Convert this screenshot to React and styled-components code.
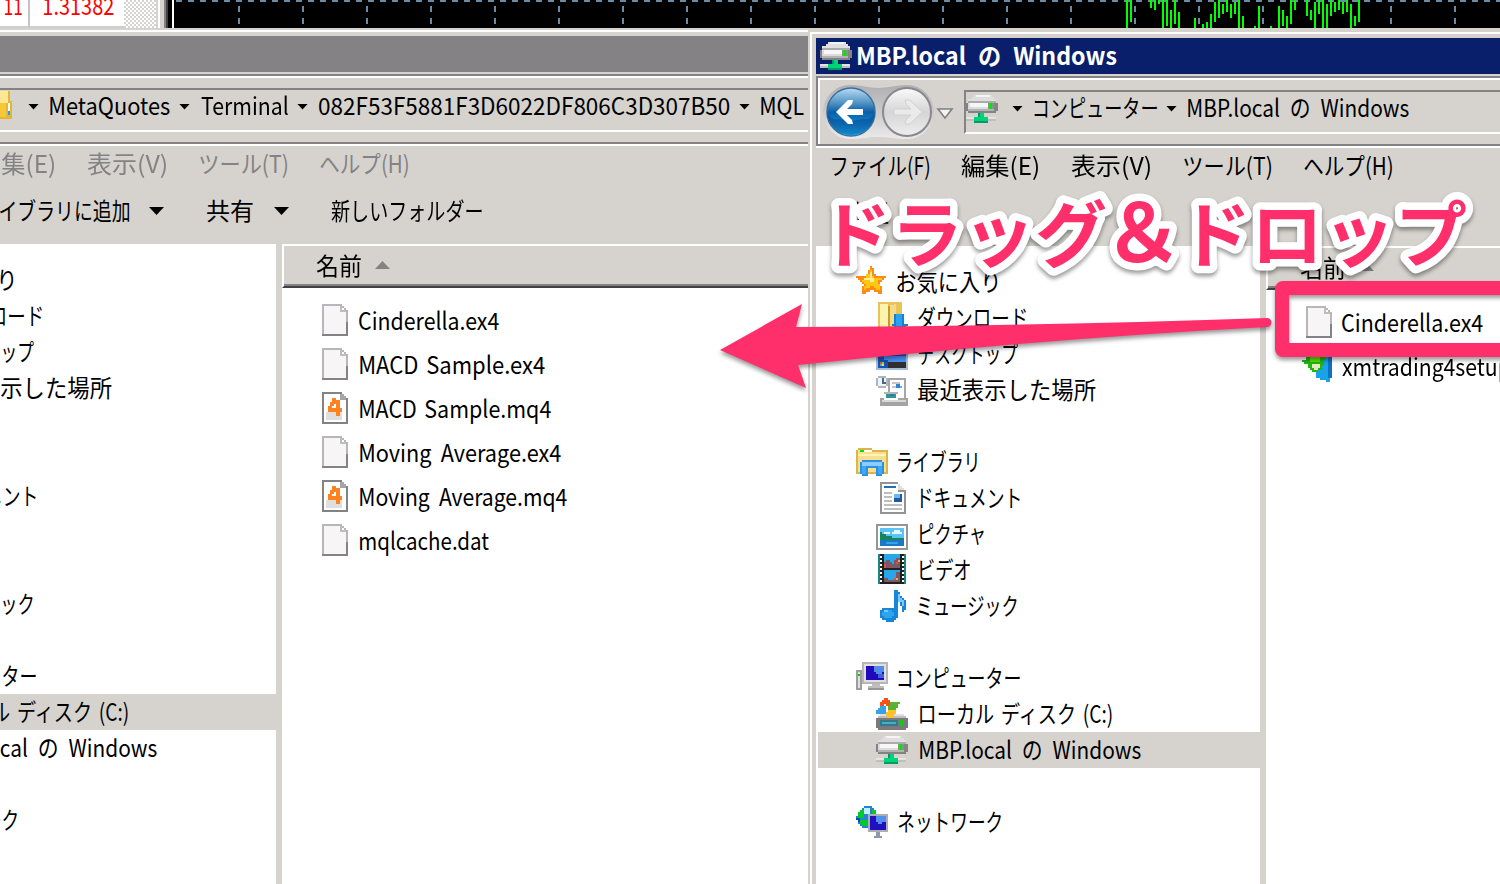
import React, { useLayoutEffect, useRef } from 'react';
import styled, { createGlobalStyle, css } from 'styled-components';

const FACE = '#d6d3ce';
const SHADE = '#848284';
const DARK = '#424142';
const PINK = '#ff2f6c';
const UI_FONT = '"Noto Sans CJK JP", "Liberation Sans", sans-serif';

const GlobalStyle = createGlobalStyle`
  * { box-sizing: border-box; }
  body { margin: 0; background: ${FACE}; font-family: ${UI_FONT}; font-size: 24px; color: #000; }
`;

/* ---------- text condensed to the width of the system UI font ---------- */

const LabelBox = styled.span`
  display: block;
  flex: none;
  width: ${p => p.$w}px;
  margin-left: ${p => p.$dx || 0}px;
  margin-bottom: ${p => p.$lift || 0}px;
  height: 30px;
  line-height: 30px;
  white-space: nowrap;
  font-size: 24px;
  font-weight: ${p => (p.$bold ? 700 : 400)};
  word-spacing: ${p => p.$gap || 0}px;
  color: ${p => p.$color || 'inherit'};
`;

const LabelText = styled.span`
  display: inline-block;
  transform-origin: 0 50%;
`;

function Label({ w, dx, lift, gap, bold, color, children }) {
  const ref = useRef(null);
  useLayoutEffect(() => {
    const el = ref.current;
    const ctx = document.createElement('canvas').getContext('2d');
    const cs = getComputedStyle(el);
    ctx.font = `${cs.fontWeight} ${cs.fontSize} ${cs.fontFamily}`;
    ctx.wordSpacing = `${gap || 0}px`;
    const m = ctx.measureText(children);
    const scale = w / (m.actualBoundingBoxLeft + m.actualBoundingBoxRight);
    el.style.transform = `translateX(${m.actualBoundingBoxLeft * scale}px) scaleX(${scale})`;
  }, [w, gap, children]);
  return (
    <LabelBox $w={w} $dx={dx} $lift={lift} $gap={gap} $bold={bold} $color={color}>
      <LabelText ref={ref}>{children}</LabelText>
    </LabelBox>
  );
}

/* ---------- icons, on a 16 x 16 grid ---------- */

const Pixel = styled.svg.attrs({ shapeRendering: 'crispEdges' })`
  display: block;
  flex: none;
  width: ${p => p.$w || 32}px;
  height: 32px;
`;

const NetDrive = () => (
  <Pixel viewBox="0 -1 16 16">
    <path d="M4 0h9v1h1v1h1v1H1V2h2V1h1z" fill="#dedfde" />
    <path d="M5 0h7v1H5z" fill="#f4f4f4" />
    <path d="M1 3h14v1h1v4h-1v1H1V8H0V4h1z" fill="#848284" />
    <path d="M1 3h14v1H1z" fill="#adaaad" />
    <path d="M1 4h13v4H1z" fill="#dcdcdc" />
    <path d="M2 4h10v2H2z" fill="#f7f7f7" />
    <path d="M1 7h13v1H1z" fill="#b5b2b5" />
    <path d="M11 4h3v3h-3z" fill="#73a273" />
    <path d="M12 4h1v3h-1z" fill="#00e800" />
    <path d="M0 11h15v2H0z" fill="#e4e4e4" />
    <path d="M0 12h15v1H0z" fill="#bdbebd" />
    <path d="M6 9h3v2h2v3H4v-3h2z" fill="#00d276" />
    <path d="M6 9h1v2H6zM4 13h7v1H4z" fill="#009a6b" />
  </Pixel>
);

const Star = () => (
  <Pixel viewBox="0 0 16 16">
    <path d="M7 0h1v1h1v3h1v1h5v1h-1v1h-1v1h-1v2h1v4h-2v-1H9v-1H7v1H5v1H3v-4h1V9H3V8H2V7H1V6H0V5h5V4h1V2h1z" fill="#ff8a18" />
    <path d="M7 2h1v3h1v1h4v1h-2v2h1v3h-2v-1H9v-1H7v1H5v1H4v-2h1V9H4V8H3V7h1V6h1V4h2z" fill="#ffc710" />
    <path d="M7 3h1v3h1v2H7V7H4V6h3z" fill="#ffef94" />
  </Pixel>
);

const Downloads = () => (
  <Pixel viewBox="0 0 16 16">
    <path d="M1 0h12v13H1z" fill="#e7c35a" />
    <path d="M2 1h4v12H2z" fill="#fff3ad" />
    <path d="M6 2l4-1v11l-4 2z" fill="#f7db84" />
    <path d="M6 2h1v12H6z" fill="#c69a31" />
    <path d="M9 6h5v5h2v1h-1v1h-1v1h-1v1h-2v-1h-1v-1H9v-1H8v-1h1z" fill="#1082d6" />
    <path d="M10 6h3v6h-3z" fill="#29a2ef" />
  </Pixel>
);

const DesktopIcon = () => (
  <Pixel viewBox="0 0 16 16">
    <path d="M0 2h16v14H0z" fill="#a5bed6" />
    <path d="M1 3h14v8H1z" fill="#1851c6" />
    <path d="M4 9h11v3H4z" fill="#4a8ef7" />
    <path d="M1 12h14v3H1z" fill="#313031" />
    <path d="M1 11h5v4H1z" fill="#1851b5" />
    <path d="M2 12h1v1H2z" fill="#ff4a18" />
    <path d="M3 12h1v1H3z" fill="#7bdb31" />
    <path d="M2 13h1v1H2z" fill="#31b2ff" />
    <path d="M3 13h1v1H3z" fill="#ffdb31" />
  </Pixel>
);

const Recent = () => (
  <Pixel viewBox="0 0 16 16">
    <path d="M6 2h9v11H6z" fill="#a5a6a5" />
    <path d="M7 3h7v9H7z" fill="#fff" />
    <path d="M8 4h4v1H8zM8 6h2v1H8z" fill="#c6c7c6" />
    <path d="M10 5h2v2h-2z" fill="#3182ce" />
    <path d="M12 6h1v1h-1z" fill="#52aeff" />
    <path d="M4 9h7v4H4z" fill="#fff" />
    <path d="M4 9h7v1H4z" fill="#b5b6b5" />
    <path d="M5 10h5v2H5z" fill="#31968c" />
    <path d="M7 10h2v1H7z" fill="#2979bd" />
    <path d="M2 12h2v1h8v-1h4v4H2z" fill="#a5a2a5" />
    <path d="M3 13h12v1H3z" fill="#d6d7d6" />
    <path d="M1 1h4v1h1v4H5v1H1V6H0V2h1z" fill="#adb6bd" />
    <path d="M1 2h4v4H1z" fill="#eff3f7" />
    <path d="M3 2h1v2h1v1H3z" fill="#4a6984" />
  </Pixel>
);

const Library = () => (
  <Pixel viewBox="0 0 16 16">
    <path d="M0 2h1V1h7v1h8v12H0z" fill="#dcb44a" />
    <path d="M1 2h6v1h8v10H1z" fill="#f7df8c" />
    <path d="M1 4h14v1H1z" fill="#fff3b5" />
    <path d="M2 2h2v1H2z" fill="#00e300" />
    <path d="M4 2h4v1H4z" fill="#fff" />
    <path d="M3 7h10v1h1v6h-1v1h-3v-4H6v4H3v-1H2V8h1z" fill="#2992e6" />
    <path d="M3 8h10v2H3z" fill="#8ccbff" />
    <path d="M3 10h2v4H3zM11 10h2v4h-2z" fill="#42a6f7" />
  </Pixel>
);

const DocumentIcon = () => (
  <Pixel viewBox="0 0 16 16">
    <path d="M2 0h9v1h1v1h1v1h1v1h1v12H2z" fill="#949294" />
    <path d="M3 1h8v4h3v10H3z" fill="#fff" />
    <path d="M11 1h1v1h1v1h1v1h-3z" fill="#dedfde" />
    <path d="M4 2h6v1H4z" fill="#2171b5" />
    <path d="M4 5h4v1H4zM4 7h4v1H4zM4 9h4v1H4zM4 11h9v1H4zM4 13h9v1H4z" fill="#bdbebd" />
    <path d="M9 6h4v4H9z" fill="#2159a5" />
    <path d="M9 6h3v2H9z" fill="#6bbaf7" />
  </Pixel>
);

const Picture = () => (
  <Pixel viewBox="0 0 16 16">
    <path d="M0 3h16v13H0z" fill="#949694" />
    <path d="M1 4h14v11H1z" fill="#fff" />
    <path d="M2 5h12v9H2z" fill="#5ac3f7" />
    <path d="M8 7h1V6h3v1h1v1H8zM4 7h3v1H4z" fill="#e7f7ff" />
    <path d="M2 7h1v1h2v1h3v1h6v1H2z" fill="#18865a" />
    <path d="M2 11h12v3H2z" fill="#1879c6" />
    <path d="M5 12h6v1H5z" fill="#39a2e7" />
  </Pixel>
);

const Video = () => (
  <Pixel viewBox="0 0 16 16">
    <path d="M1 0h14v15H1z" fill="#212021" />
    <path d="M1 0h1v15H1zM14 0h1v15h-1z" fill="#18867b" />
    <path d="M2 1h1v1H2zM2 3h1v1H2zM2 5h1v1H2zM2 7h1v1H2zM2 9h1v1H2zM2 11h1v1H2zM2 13h1v1H2zM13 1h1v1h-1zM13 3h1v1h-1zM13 5h1v1h-1zM13 7h1v1h-1zM13 9h1v1h-1zM13 11h1v1h-1zM13 13h1v1h-1z" fill="#fff" />
    <path d="M4 0h8v7H4zM4 8h8v6H4z" fill="#29a6e7" />
    <path d="M4 4h1V3h2v1h1v1h1V3h1V2h2v5H4zM4 12h2v1h3v-1h1V9h2v5H4z" fill="#7b5963" />
    <path d="M4 5h1v2H4zM10 4h1v1h-1zM9 12h1v1H9z" fill="#e74a4a" />
    <path d="M11 3h1v1h-1zM10 12h1v1h-1z" fill="#ffa64a" />
  </Pixel>
);

const Music = () => (
  <Pixel viewBox="0 0 16 16">
    <path d="M9 0h2v1h1v2h1v1h1v1h1v5h-1v1h-1V8h-1V6h-1v8h-1v1H9v1H5v-1H3v-1H2v-4h1V9h6z" fill="#1886d6" />
    <path d="M4 10h4v1h1v2H8v1H4v-1H3v-2h1z" fill="#29a6ef" />
    <path d="M11 2h1v2h1v1h1v3h-1V6h-2zM4 10h2v1H4z" fill="#7bc7ff" />
  </Pixel>
);

const Computer = () => (
  <Pixel viewBox="0 0 16 16">
    <path d="M0 4h3v10H0z" fill="#9c9e9c" />
    <path d="M1 5h1v8H1z" fill="#dedfde" />
    <path d="M1 6h1v1H1z" fill="#00d200" />
    <path d="M3 0h13v11H3z" fill="#b5b6b5" />
    <path d="M4 1h11v9H4z" fill="#dedfde" />
    <path d="M5 2h9v7H5z" fill="#2108bd" />
    <path d="M9 2h5v3h-1v1h-3V5H9z" fill="#528ae7" />
    <path d="M11 6h3v2h-3z" fill="#4261d6" />
    <path d="M8 11h4v1h2v2H6v-2h2z" fill="#bdbebd" />
    <path d="M6 13h8v1H6z" fill="#949694" />
  </Pixel>
);

const LocalDisk = () => (
  <Pixel viewBox="0 0 16 16">
    <path d="M2 8h12v1h1v1H1V9h1z" fill="#dedfde" />
    <path d="M1 9h14v1h1v5h-1v1H1v-1H0v-5h1z" fill="#7b797b" />
    <path d="M1 9h14v1H1z" fill="#bdbebd" />
    <path d="M2 11h9v3H2z" fill="#31798c" />
    <path d="M3 12h7v1H3z" fill="#52aabd" />
    <path d="M12 11h2v3h-2z" fill="#18c618" />
    <path d="M3 1h1V0h2v1h1v3H5V3H4v1H2V2h1z" fill="#f75118" />
    <path d="M7 2h5v1h-1v2h-1v1H6V4h1z" fill="#5ab231" />
    <path d="M2 4h3v4H0V6h1V5h1z" fill="#39a2e7" />
    <path d="M6 6h4v2H9v2H6V9H5V7h1z" fill="#ffc329" />
  </Pixel>
);

const NetworkIcon = () => (
  <Pixel viewBox="0 0 16 16">
    <path d="M3 1h1V0h4v1h1v1h1v8H8v1H3v-1H2V9H1V7H0V5h1V3h1V2h1z" fill="#2182d6" />
    <path d="M2 2h2v4H1V3h1zM2 7h4v3H3V9H2zM8 2h2v3H8z" fill="#00ca29" />
    <path d="M4 1h3v3H4z" fill="#bdf3ff" />
    <path d="M0 6h2v2H1V7H0z" fill="#1049ad" />
    <path d="M6 4h10v9H6z" fill="#adaeb5" />
    <path d="M7 5h8v7H7z" fill="#2110bd" />
    <path d="M10 5h5v3h-2v1h-2V8h-1z" fill="#528eef" />
    <path d="M10 13h2v2h1v1H9v-1h1z" fill="#8c9aad" />
  </Pixel>
);

const FolderIcon = () => (
  <Pixel viewBox="0 1 16 16">
    <path d="M2 0h12v6h1v9H2z" fill="#e7b631" />
    <path d="M3 1h10v6H3z" fill="#ffe794" />
    <path d="M3 7h9v7H3z" fill="#f7c739" />
    <path d="M13 7h1v4h-1z" fill="#fff" />
    <path d="M13 11h1v2h-1z" fill="#18a2f7" />
  </Pixel>
);

const BlankFile = () => (
  <Pixel viewBox="0 0 13 16" $w={26}>
    <path d="M0 0h10v1h1v1h1v1h1v13H0z" fill="#b9b6b9" />
    <path d="M0 15h13v1H0zM12 9h1v7h-1z" fill="#848284" />
    <path d="M1 1h8v3h3v11H1z" fill="#f8f5f6" />
    <path d="M10 1v2h2V3h-1V2h-1z" fill="#fff" />
    <path d="M9 1h1v2h2v1H9z" fill="#bdbebd" />
  </Pixel>
);

const Mq4File = () => (
  <Pixel viewBox="0 0 13 16" $w={26}>
    <path d="M0 0h10v1h1v1h1v1h1v13H0z" fill="#848284" />
    <path d="M1 1h8v3h3v11H1z" fill="#fff" />
    <path d="M9 1h2v1h1v2H9z" fill="#a5a6a5" />
    <path d="M2 10h8v4H2z" fill="#dedfde" />
    <path d="M5 3h2v1h2v4h1v2H9v2H7v-2H3V7h1V5h1z" fill="#ff8221" />
    <path d="M6 6h1v2H5V7h1z" fill="#fff" />
  </Pixel>
);

const SetupFile = () => (
  <Pixel viewBox="0 -2 16 16">
    <path d="M7 0h8v12h-1v2h-2v-1H9v-1H7z" fill="#18a2e7" />
    <path d="M13 1h2v11h-2z" fill="#1071bd" />
    <path d="M2 0h10v3h-1v3h-1v2H8v1H5V8H4V7H3V5H1V4H0V3h2z" fill="#21b610" />
    <path d="M4 0h5v4H4z" fill="#5ae708" />
    <path d="M5 5h4v2H8v1H6V7H5z" fill="#e7ebb5" />
  </Pixel>
);

const Arrow = styled.i`
  flex: none;
  display: block;
  width: ${p => p.$w}px;
  height: ${p => p.$h}px;
  margin-left: ${p => p.$dx || 0}px;
  margin-bottom: ${p => p.$lift || 0}px;
  background: ${p => p.$color || '#000'};
  clip-path: ${p => (p.$up ? 'polygon(50% 0, 100% 100%, 0 100%)' : 'polygon(0 0, 100% 0, 50% 100%)')};
`;

/* ---------- top strip: quotes table and chart ---------- */

const Strip = styled.div`
  display: flex;
  height: 28px;
  overflow: hidden;
`;

const PriceCell = styled.div`
  flex: none;
  width: ${p => p.$w}px;
  height: 28px;
  overflow: hidden;
  background: #fff;
  border-bottom: 2px solid #d0cdd0;
  border-right: ${p => (p.$line ? '2px solid #c6c3c6' : 'none')};
  display: flex;
  align-items: flex-end;
  padding: 0 0 6px ${p => p.$pad}px;
`;

const Dither = styled.div`
  flex: none;
  width: 32px;
  background: repeating-conic-gradient(${FACE} 0 25%, #fff 0 50%) 0 0 / 4px 4px;
`;

const Bevel = styled.div`
  flex: none;
  width: 18px;
  background: linear-gradient(90deg, ${FACE} 0 2px, #fff 2px 4px, ${FACE} 4px 8px, ${SHADE} 8px 10px,
    ${DARK} 10px 12px, #000 12px 16px, #fff 16px 18px);
`;

const ChartSvg = styled.svg.attrs({ shapeRendering: 'crispEdges' })`
  display: block;
  flex: none;
  width: 1326px;
  height: 28px;
  background: #000;
`;

const BARS = [
  [1126, 0, 28], [1130, 0, 22], [1150, 0, 8], [1154, 0, 10], [1158, 0, 4], [1162, 0, 28], [1166, 0, 26],
  [1170, 10, 28], [1174, 0, 24], [1178, 12, 28], [1194, 18, 28], [1202, 24, 28], [1206, 22, 28],
  [1210, 14, 28], [1214, 2, 22], [1218, 0, 18], [1222, 4, 14], [1226, 0, 12], [1230, 4, 18],
  [1234, 2, 14], [1238, 0, 28], [1242, 16, 28], [1254, 26, 28], [1258, 6, 28], [1270, 26, 28],
  [1278, 6, 28], [1282, 10, 26], [1286, 16, 28], [1290, 0, 24], [1294, 0, 10], [1306, 0, 16],
  [1310, 10, 20], [1314, 2, 28], [1318, 0, 14], [1322, 0, 28], [1326, 4, 28], [1330, 0, 16],
  [1334, 2, 12], [1338, 0, 10], [1342, 2, 14], [1346, 0, 12], [1350, 4, 28], [1354, 16, 26], [1358, 0, 22],
];

const Chart = () => (
  <ChartSvg viewBox="174 0 1326 28">
    <path d="M176 1H1500" stroke="#6b8aa3" strokeWidth="2" strokeDasharray="6 6" />
    {Array.from({ length: 20 }, (_, i) => (
      <path key={i} d={`M${239 + 64 * i} 6V28`} stroke="#6b8aa3" strokeWidth="2" strokeDasharray="6 6" />
    ))}
    {BARS.map(([x, a, b]) => (
      <rect key={x} x={x} y={a} width="2" height={b - a} fill="#00ff00" />
    ))}
  </ChartSvg>
);

/* ---------- explorer window ---------- */

const Desktop = styled.div`
  position: relative;
  width: 1500px;
  height: 884px;
  overflow: hidden;
  background: ${FACE};
`;

const WindowFrame = styled.section`
  position: absolute;
  left: ${p => p.$x}px;
  top: ${p => p.$y}px;
  width: ${p => p.$w}px;
  height: 880px;
  overflow: hidden;
  display: flex;
  flex-direction: column;
  background: ${FACE};
  padding: 8px 0 0 8px;
  box-shadow: inset 2px 2px 0 ${FACE}, inset 4px 4px 0 #fff;
`;

const TitleBar = styled.header`
  flex: none;
  height: 36px;
  margin-bottom: 2px;
  display: flex;
  align-items: center;
  padding-left: 4px;
  color: #fff;
  background: ${p => (p.$active ? '#0a1f6b' : SHADE)};
`;

const Rebar = styled.div`
  flex: none;
  height: 70px;
  margin-bottom: 2px;
  display: flex;
  border: solid ${SHADE};
  border-width: 2px 0 2px 2px;
  box-shadow: inset 2px 2px 0 #fff, 0 2px 0 #fff;
  padding: 12px 0 0 4px;
`;

const NavButtons = styled.svg`
  display: block;
  flex: none;
  width: 133px;
  height: 56px;
  margin-top: -6px;
`;

const AddressBox = styled.div`
  flex: none;
  width: 1000px;
  height: 44px;
  margin-left: 9px;
  display: flex;
  align-items: center;
  border: solid;
  border-width: 2px 0 2px 2px;
  border-color: ${SHADE} #fff #fff ${SHADE};
  padding-bottom: 6px;
`;

const MenuBar = styled.nav`
  flex: none;
  height: 36px;
  display: flex;
  align-items: center;
  padding-bottom: 3px;
  color: ${p => (p.$active ? '#000' : SHADE)};
`;

const ToolBar = styled.div`
  flex: none;
  height: 62px;
  display: flex;
  align-items: center;
  padding-bottom: 4px;
`;

const Body = styled.div`
  flex: 1;
  display: flex;
  min-height: 0;
`;

const NavPane = styled.aside`
  flex: none;
  width: 444px;
  padding-top: 18px;
  background: #fff;
`;

const NavRow = styled.div`
  display: flex;
  align-items: center;
  height: 36px;
  margin-left: 2px;
  padding-left: ${p => (p.$child ? 58 : 38)}px;
  ${p => p.$selected && css`background: ${FACE};`}
`;

const NavSpacer = styled.div`
  height: 36px;
`;

const ListPane = styled.main`
  flex: none;
  width: 800px;
  margin-left: 6px;
  background: #fff;
`;

const ListHeader = styled.div`
  display: flex;
  align-items: center;
  height: 44px;
  padding: 0 0 2px 32px;
  background: ${FACE};
  border-top: 2px solid #fff;
  border-left: 2px solid #fff;
  border-bottom: 2px solid ${DARK};
  box-shadow: inset 0 -2px 0 ${SHADE};
`;

const FileRows = styled.div`
  padding: 10px 0 0 40px;
`;

const FileRow = styled.div`
  display: flex;
  align-items: center;
  height: 44px;
`;

const NAV = [
  { t: 'お気に入り', w: 100, dx: 9, Icon: Star },
  { t: 'ダウンロード', w: 108, dx: 10, Icon: Downloads, child: true },
  { t: 'デスクトップ', w: 99, dx: 11, Icon: DesktopIcon, child: true },
  { t: '最近表示した場所', w: 178, dx: 10, Icon: Recent, child: true },
  null,
  { t: 'ライブラリ', w: 79, dx: 10, Icon: Library },
  { t: 'ドキュメント', w: 99, dx: 13, Icon: DocumentIcon, child: true },
  { t: 'ピクチャ', w: 64, dx: 12, Icon: Picture, child: true },
  { t: 'ビデオ', w: 50, dx: 12, Icon: Video, child: true },
  { t: 'ミュージック', w: 99, dx: 10, Icon: Music, child: true },
  null,
  { t: 'コンピューター', w: 122, dx: 10, Icon: Computer },
  { t: 'ローカル ディスク (C:)', w: 193, dx: 12, Icon: LocalDisk, child: true, gap: 3 },
  { t: 'MBP.local の Windows', w: 221, dx: 12, Icon: NetDrive, child: true, gap: 6 },
  null,
  { t: 'ネットワーク', w: 103, dx: 10, Icon: NetworkIcon },
];

const MENU = [
  { t: 'ファイル(F)', w: 97, dx: 16 },
  { t: '編集(E)', w: 77, dx: 32 },
  { t: '表示(V)', w: 79, dx: 33 },
  { t: 'ツール(T)', w: 87, dx: 34 },
  { t: 'ヘルプ(H)', w: 88, dx: 33 },
];

const HistoryButtons = () => (
  <NavButtons viewBox="822 85 133 56">
    <defs>
      <linearGradient id="back" x1="0" y1="0" x2="0" y2="1">
        <stop offset="0" stopColor="#b8dcf4" />
        <stop offset="0.3" stopColor="#5596c6" />
        <stop offset="0.5" stopColor="#0a5ea6" />
        <stop offset="0.75" stopColor="#0e86d0" />
        <stop offset="1" stopColor="#1ccbff" />
      </linearGradient>
      <linearGradient id="fwd" x1="0" y1="0" x2="0" y2="1">
        <stop offset="0" stopColor="#fbfafb" />
        <stop offset="0.5" stopColor="#d6d5d6" />
        <stop offset="1" stopColor="#efeeef" />
      </linearGradient>
      <linearGradient id="pill" x1="0" y1="0" x2="0" y2="1">
        <stop offset="0" stopColor="#a9a8ab" />
        <stop offset="0.5" stopColor="#c9c8cb" />
        <stop offset="1" stopColor="#efeef0" />
      </linearGradient>
    </defs>
    <path d="M850 86C862 86 868 89 878 89S896 86 907 86A27 27 0 0 1 907 140C896 140 890 138 878 138S862 140 850 140A27 27 0 0 1 850 86Z" fill="url(#pill)" opacity="0.85" />
    <circle cx="851" cy="113" r="24" fill="url(#back)" stroke="#3a6f9f" strokeWidth="1.5" />
    <path d="M827 112a24 24 0 0 0 48 0c-2 8-8 9-12 8l-12 2-12-2c-4 1-10 0-12-8z" fill="#0b3f86" opacity="0.45" />
    <path d="M836 113l12-12h5l-1 4-5 5h16v6h-16l5 5 1 4h-5z" fill="#fff" />
    <circle cx="907" cy="113" r="24" fill="url(#fwd)" stroke="#8a888c" strokeWidth="2" />
    <path d="M922 113l-12-12h-5l1 4 5 5h-17v6h17l-5 5-1 4h5z" fill="#ebeaeb" stroke="#d3d1d3" />
    <path d="M938 110h14l-7 9z" fill="#f3f3f3" stroke="#7f8084" strokeWidth="1.6" />
  </NavButtons>
);

function ExplorerWindow({ x, y, w, active, title, addressIcon, path, tools, selected, files }) {
  return (
    <WindowFrame $x={x} $y={y} $w={w}>
      <TitleBar $active={active}>
        {title && <NetDrive />}
        {title && <Label w={259} dx={6} lift={2} gap={7} bold>{title}</Label>}
      </TitleBar>
      <Rebar>
        <HistoryButtons />
        <AddressBox>
          {addressIcon}
          {path.map((p, i) => (
            <React.Fragment key={p.t}>
              <Arrow $w={11} $h={6} $dx={i ? 9 : 14} $lift={1} />
              <Label w={p.w} dx={11} lift={5} gap={p.gap}>{p.t}</Label>
            </React.Fragment>
          ))}
        </AddressBox>
      </Rebar>
      <MenuBar $active={active}>
        {MENU.map(m => <Label key={m.t} w={m.w} dx={m.dx}>{m.t}</Label>)}
      </MenuBar>
      <ToolBar>
        {tools.map(t => (
          <React.Fragment key={t.t}>
            <Label w={t.w} dx={t.dx} lift={2}>{t.t}</Label>
            {t.menu && <Arrow $w={15} $h={8} $dx={t.menu} />}
          </React.Fragment>
        ))}
      </ToolBar>
      <Body>
        <NavPane>
          {NAV.map((n, i) => n ? (
            <NavRow key={n.t} $child={n.child} $selected={n.t === selected}>
              <n.Icon />
              <Label w={n.w} dx={n.dx} lift={3} gap={n.gap}>{n.t}</Label>
            </NavRow>
          ) : <NavSpacer key={i} />)}
        </NavPane>
        <ListPane>
          <ListHeader>
            <Label w={45}>名前</Label>
            <Arrow $w={15} $h={8} $dx={14} $up $color={SHADE} />
          </ListHeader>
          <FileRows>
            {files.map(f => (
              <FileRow key={f.t}>
                {f.icon}
                <Label w={f.w} dx={f.dx || 12} gap={f.gap}>{f.t}</Label>
              </FileRow>
            ))}
          </FileRows>
        </ListPane>
      </Body>
    </WindowFrame>
  );
}

const SetupIconSlot = styled.div`
  margin: 0 -2px 0 -4px;
`;

/* ---------- annotation layer ---------- */

const Annotation = styled.svg`
  position: absolute;
  left: 0;
  top: 0;
  width: 1500px;
  height: 884px;
  pointer-events: none;
`;

const Shadowed = styled.g`
  filter: drop-shadow(0 3px 2px rgba(0, 0, 0, 0.4));
`;

const Headline = styled.text`
  font-family: "Noto Sans CJK JP", sans-serif;
  font-weight: 700;
  font-size: 72px;
  fill: ${PINK};
  stroke: #fff;
  stroke-width: 15px;
  stroke-linejoin: round;
  paint-order: stroke fill;
`;

const Ampersand = styled.tspan`
  font-size: 80px;
`;

export default function App() {
  return (
    <Desktop>
      <GlobalStyle />
      <Strip>
        <PriceCell $w={30} $pad={5} $line><Label w={17} color="#f00">11</Label></PriceCell>
        <PriceCell $w={94} $pad={14}><Label w={70} color="#f00">1.31382</Label></PriceCell>
        <Dither />
        <Bevel />
        <Chart />
      </Strip>
      <ExplorerWindow
        x={-176} y={28} w={984}
        addressIcon={<FolderIcon />}
        path={[
          { t: 'MetaQuotes', w: 120 },
          { t: 'Terminal', w: 87 },
          { t: '082F53F5881F3D6022DF806C3D307B50', w: 411 },
          { t: 'MQL', w: 43 },
        ]}
        tools={[
          { t: '整理', w: 47, dx: 26, menu: 16 },
          { t: 'ライブラリに追加', w: 147, dx: 46, menu: 20 },
          { t: '共有', w: 46, dx: 43, menu: 21 },
          { t: '新しいフォルダー', w: 151, dx: 42 },
        ]}
        selected="ローカル ディスク (C:)"
        files={[
          { t: 'Cinderella.ex4', w: 140, dx: 11, icon: <BlankFile /> },
          { t: 'MACD Sample.ex4', w: 185, gap: 3, icon: <BlankFile /> },
          { t: 'MACD Sample.mq4', w: 191, gap: 3, icon: <Mq4File /> },
          { t: 'Moving Average.ex4', w: 201, gap: 5, icon: <BlankFile /> },
          { t: 'Moving Average.mq4', w: 207, gap: 5, icon: <Mq4File /> },
          { t: 'mqlcache.dat', w: 129, icon: <BlankFile /> },
        ]}
      />
      <ExplorerWindow
        x={808} y={30} w={692} active
        title="MBP.local の Windows"
        addressIcon={<NetDrive />}
        path={[
          { t: 'コンピューター', w: 123 },
          { t: 'MBP.local の Windows', w: 221, gap: 6 },
        ]}
        tools={[{ t: '整理', w: 47, dx: 26, menu: 16 }]}
        selected="MBP.local の Windows"
        files={[
          { t: 'Cinderella.ex4', w: 141, dx: 10, icon: <BlankFile /> },
          { t: 'xmtrading4setup', w: 168, dx: 10, icon: <SetupIconSlot><SetupFile /></SetupIconSlot> },
        ]}
      />
      <Annotation viewBox="0 0 1500 884">
        <Shadowed>
          <path d="M720 350L802 304L796 327Q1040 326 1267 318A4.5 4.5 0 0 1 1267 327Q1040 339 798 365L806 388Z" fill={PINK} />
        </Shadowed>
        <Shadowed>
          <rect x="1282" y="288" width="260" height="62" rx="1" fill="none" stroke={PINK} strokeWidth="14" strokeLinejoin="round" />
        </Shadowed>
        <Shadowed>
          <Headline x="819" y="261">
            ドラッグ<Ampersand dx="-4">＆</Ampersand><tspan dx="-4">ドロップ</tspan>
          </Headline>
        </Shadowed>
      </Annotation>
    </Desktop>
  );
}
